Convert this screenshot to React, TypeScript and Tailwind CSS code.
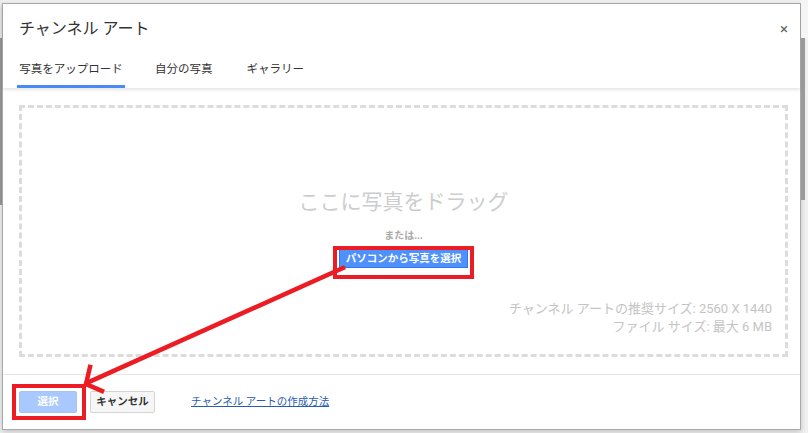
const jp = "font-['Roboto','Noto_Sans_CJK_JP',sans-serif]";

function RedArrow() {
  return (
    <svg className="absolute left-0 top-0 pointer-events-none" width="808" height="433" viewBox="0 0 808 433">
      <g stroke="#ec1c24" strokeWidth="4.5" fill="none" strokeLinecap="square">
        <line x1="343" y1="268" x2="89" y2="382" />
        <line x1="86" y1="384" x2="90" y2="367" />
        <line x1="86" y1="384" x2="102" y2="391" />
      </g>
    </svg>
  );
}

export default function App() {
  return (
    <div className={`relative flex h-[433px] w-[808px] overflow-hidden bg-[#f1f1f1] ${jp}`}>
      <div className="flex w-[2px] flex-col">
        <div className="h-[38px] bg-[#ececec]" />
        <div className="h-[167px] bg-[#9a9a9a]" />
      </div>
      <div className="mt-[3px] flex h-[427px] w-[799px] flex-col border border-[#a9a9a9] bg-white shadow-[0_2px_6px_rgba(0,0,0,0.2)]">
        <div className="relative z-10 flex h-[84px] flex-col shadow-[0_2px_3px_rgba(0,0,0,0.1)]">
          <div className="flex items-center justify-between pl-[16px] pr-[12px] pt-[13px]">
            <h1 className="text-[16px] leading-[24px] text-[#333]">チャンネル アート</h1>
            <span className="text-[15px] leading-none text-[#666]">×</span>
          </div>
          <div className="mt-auto flex whitespace-nowrap pl-[14px] text-[11.5px] text-[#333]">
            <div className="flex h-[30px] w-[108px] flex-col items-center border-b-[3px] border-[#4a8af4] pt-[3px]">写真をアップロード</div>
            <div className="ml-[30px] pt-[3px]">自分の写真</div>
            <div className="ml-[34px] pt-[3px]">ギャラリー</div>
          </div>
        </div>
        <div className="flex flex-1 px-[16px] pb-[17px] pt-[17px] pr-[12px]">
          <div className="flex flex-1 flex-col items-center border-[3px] border-dashed border-[#dcdcdc]">
            <div className="mt-[80px] text-[21px] leading-[28px] text-[#cdcdcd]">ここに写真をドラッグ</div>
            <div className="mt-[12px] text-[10px] font-bold text-[#aaa]">または...</div>
            <div className="mt-[6px] flex h-[19px] items-center border border-[#3079ed] bg-[#4d90fe] px-[6px] text-[10.5px] font-bold text-white">
              パソコンから写真を選択
            </div>
            <div className="mt-auto mb-[18px] self-end pr-[13px] text-right text-[13px] leading-[18px] text-[#c4c4c4]">
              <div>チャンネル アートの推奨サイズ: 2560 X 1440</div>
              <div>ファイル サイズ: 最大 6 MB</div>
            </div>
          </div>
        </div>
        <div className="flex h-[55px] items-start border-t border-[#e5e5e5] pl-[16px] pt-[16px]">
          <div className="flex h-[22px] w-[58px] items-center justify-center rounded-[2px] border border-[#a6c3f8] bg-[#a8c8fe] text-[10.5px] font-bold text-white">選択</div>
          <div className="ml-[13px] flex h-[22px] w-[65px] items-center justify-center rounded-[2px] border border-[#d3d3d3] bg-[#f6f6f6] text-[10.5px] font-bold text-[#333]">キャンセル</div>
          <a className="ml-[36px] mt-[3px] text-[10.5px] text-[#2a5db0] underline">チャンネル アートの作成方法</a>
        </div>
      </div>
      <div className="flex flex-1 flex-col">
        <div className="h-[38px] bg-[#f5f5f5]" />
        <div className="h-[162px] w-[4px] bg-[#9a9a9a]" />
      </div>
      <div className="absolute left-[333px] top-[246px] h-[33px] w-[141px] border-4 border-[#ec1c24]" />
      <div className="absolute left-[12px] top-[384px] h-[36px] w-[74px] border-4 border-[#ec1c24]" />
      <RedArrow />
    </div>
  );
}
